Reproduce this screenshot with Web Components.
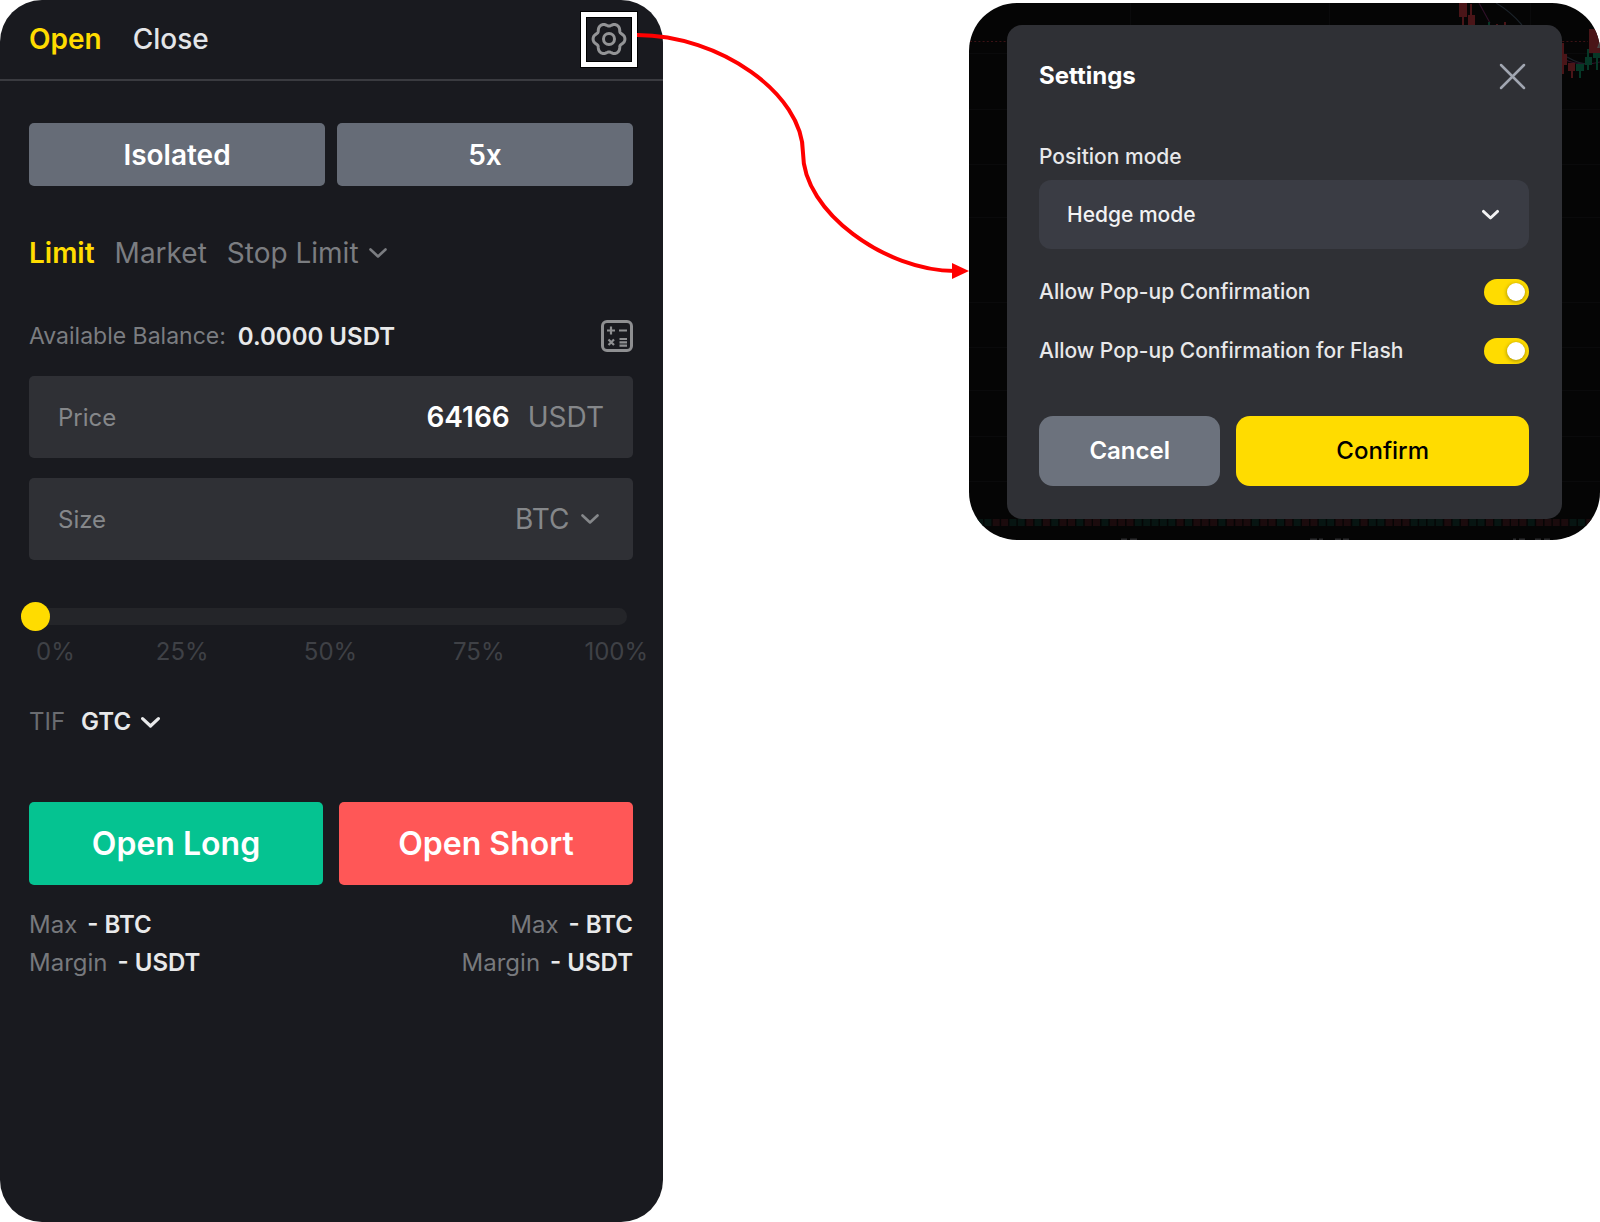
<!DOCTYPE html>
<html lang="en">
<head>
<meta charset="utf-8">
<title>Futures order settings</title>
<style>
  body { margin: 0; background: #fff; font-family: Inter, "Liberation Sans", sans-serif; }
</style>
</head>
<body>
<guide-page></guide-page>

<script>
const reset = `
  *, *::before, *::after { box-sizing: border-box; }
  button, input, select { font: inherit; color: inherit; border: 0; margin: 0; padding: 0; background: none; outline: 0; border-radius: 0; }
  button, select { cursor: pointer; }
  svg { display: block; flex: none; }
`;

function define(name, render) {
  customElements.define(name, class extends HTMLElement {
    constructor() {
      super();
      this.attachShadow({ mode: 'open' });
    }
    connectedCallback() {
      this.shadowRoot.innerHTML = `<style>${reset}</style>` + render(this);
    }
  });
}

/* Native select with its own chevron */
define('drop-down', el => `
  <style>
    :host { display: inline-grid; align-items: center; }
    select { grid-area: 1 / 1; appearance: none; width: 100%; height: 100%; padding: 0 var(--arrow-space, 28px) 0 var(--indent, 0px); font-weight: inherit; }
    option { color: #000; }
    svg { grid-area: 1 / 1; justify-self: end; pointer-events: none; margin-right: var(--arrow-inset, 0px); }
  </style>
  <select aria-label="${el.getAttribute('label')}"><option>${el.getAttribute('value')}</option></select>
  <svg width="${el.getAttribute('size') || 18}" viewBox="0 0 18 12" fill="none" stroke="currentColor" stroke-width="${el.getAttribute('stroke') || 2.6}" stroke-linecap="round" stroke-linejoin="round"><path d="M1.5 2.5 9 9.5l7.5-7"/></svg>
`);

define('solid-button', () => `
  <style>
    :host { display: block; }
    button { width: 100%; height: var(--height); border-radius: var(--radius, 5px); background: var(--fill); color: var(--ink, #fff); font-size: var(--size); font-weight: var(--weight, 600); }
  </style>
  <button type="button"><slot></slot></button>
`);

define('field-box', el => `
  <style>
    :host { display: flex; align-items: center; height: 82px; padding: 0 29px; border-radius: 5px; background: #2f3035; color: #85878a; font-size: 28px; }
    label { font-size: 24px; flex: none; }
    input { flex: 1; min-width: 0; text-align: right; color: #fff; font-weight: 600; margin-right: 18px; }
  </style>
  <label for="value">${el.getAttribute('label')}</label>
  <input id="value" type="text" inputmode="decimal" value="${el.getAttribute('value') || ''}">
  <slot></slot>
`);

define('percent-slider', () => `
  <style>
    :host { display: block; }
    input { display: block; appearance: none; height: 30px; width: calc(100% + 2px); margin-left: -8px; }
    input::-webkit-slider-runnable-track { height: 17px; border-radius: 9px; background: linear-gradient(#242529, #242529) 8px 0 / calc(100% - 8px) 100% no-repeat; }
    input::-webkit-slider-thumb { appearance: none; width: 29px; height: 29px; margin-top: -6px; border-radius: 50%; background: #ffdc00; }
    .marks { display: grid; grid-template-columns: 72fr 148fr 148fr 148fr 95fr; margin: 5px -15px 0 7px; font-size: 24px; line-height: 32px; color: #3f4146; text-align: center; }
    .marks span:first-child { text-align: left; }
    .marks span:last-child { text-align: right; }
  </style>
  <input type="range" min="0" max="100" value="0" aria-label="Percent of balance">
  <div class="marks"><span>0%</span><span>25%</span><span>50%</span><span>75%</span><span>100%</span></div>
`);

define('order-stats', () => `
  <style>
    :host { display: block; font-size: 24px; line-height: 38px; color: #77797d; }
    div { display: flex; gap: 10px; justify-content: var(--align, flex-start); }
    b { font-weight: 600; color: #e8e9ea; }
  </style>
  <div><span>Max</span><b>- BTC</b></div>
  <div><span>Margin</span><b>- USDT</b></div>
`);

/* Six-lobed cog outline */
const cog = 'M' + Array.from({ length: 90 }, (_, i) => {
  const a = i / 90 * Math.PI * 2;
  const r = 14.6 + 1.5 * Math.cos(6 * a) - 0.2 * Math.cos(12 * a);
  return (r * Math.cos(a)).toFixed(2) + ' ' + (r * Math.sin(a)).toFixed(2);
}).join('L') + 'Z';

define('order-panel', () => `
  <style>
    :host { display: block; min-height: 100vh; box-sizing: border-box; border-radius: 42px; background: #191a1f; color: #e3e5e8; overflow: hidden; }
    header { display: flex; align-items: center; height: 81px; padding: 0 26px 1px 29px; border-bottom: 2px solid #3a3b40; font-size: 28px; gap: 31px; }
    header button { font-weight: 500; }
    header .on { font-weight: 600; color: #ffdc00; }
    header .gear { margin-left: auto; width: 56px; height: 55px; border: 5px solid #fff; outline: 1px solid #000; box-shadow: inset 0 0 0 1px #000; display: grid; place-items: center; color: #939496; }
    main { padding: 42px 30px 40px 29px; }
    .pair { display: grid; grid-template-columns: 1fr 1fr; gap: 12px; }
    .mode { --fill: #666c77; --height: 63px; --size: 28px; }
    .types { display: flex; gap: 20px; margin: 50px 0; height: 34px; font-size: 28px; color: #7b7d81; }
    .types .on { color: #ffdc00; font-weight: 600; }
    .balance { display: flex; align-items: center; gap: 12px; height: 32px; margin-bottom: 24px; font-size: 23px; color: #7b7d81; }
    .balance b { font-size: 24px; font-weight: 600; color: #e8e9ea; }
    .balance button { margin-left: auto; color: #8e8f91; }
    field-box { margin-bottom: 20px; }
    percent-slider { margin-top: 41px; }
    .tif { display: flex; gap: 16px; height: 32px; line-height: 32px; margin: 38px 0 64px; font-size: 24px; color: #6a6c70; }
    .tif drop-down { color: #e8e9ea; font-weight: 600; }
    .actions { gap: 16px; --height: 83px; --size: 32px; }
    .long { --fill: #05c391; }
    .short { --fill: #ff5757; }
    .stats { margin-top: 21px; }
  </style>
  <header>
    <button type="button" class="on">Open</button>
    <button type="button">Close</button>
    <button type="button" class="gear" aria-label="Settings">
      <svg width="36" height="36" viewBox="-18 -18 36 36" fill="none" stroke="currentColor" stroke-width="3" stroke-linejoin="round">
        <path d="${cog}"/>
        <circle r="5.500"/>
      </svg>
    </button>
  </header>
  <main>
    <div class="pair mode"><solid-button>Isolated</solid-button><solid-button>5x</solid-button></div>
    <div class="types">
      <button type="button" class="on">Limit</button>
      <button type="button">Market</button>
      <drop-down label="Stop order type" value="Stop Limit"></drop-down>
    </div>
    <div class="balance">
      <span>Available Balance:</span><b>0.0000 USDT</b>
      <button type="button" aria-label="Calculator">
        <svg width="32" height="32" viewBox="0 0 32 32" fill="none" stroke="currentColor" stroke-width="2.200">
          <rect x="1.500" y="1.500" width="29" height="29" rx="4.500" stroke-width="3"/>
          <path d="M6 10.500h8M10 6.500v8M18 10.500h8M7.500 19.500l5.500 5.500M13 19.500l-5.500 5.500M18.500 19h7.500M18.500 22.300h7.500M18.500 25.600h7.500"/>
        </svg>
      </button>
    </div>
    <field-box label="Price" value="64166">USDT</field-box>
    <field-box label="Size"><drop-down label="Size unit" value="BTC" style="--arrow-space:34px;--arrow-inset:5px"></drop-down></field-box>
    <percent-slider></percent-slider>
    <div class="tif"><span>TIF</span><drop-down label="Time in force" value="GTC" size="19" stroke="3"></drop-down></div>
    <div class="pair actions"><solid-button class="long">Open Long</solid-button><solid-button class="short">Open Short</solid-button></div>
    <div class="pair stats"><order-stats></order-stats><order-stats style="--align:flex-end"></order-stats></div>
  </main>
`);

define('link-arrow', () => `
  <style>
    :host { display: block; position: relative; z-index: 1; margin-left: -26px; pointer-events: none; }
    svg { width: 100%; height: auto; }
  </style>
  <svg viewBox="0 0 332 290" fill="none" aria-hidden="true">
    <path d="M0 35C83 35 166 94 166 153S249 271 318 271" stroke="#f00" stroke-width="4"/>
    <path d="M315 263l17 8-17 8z" fill="#f00"/>
  </svg>
`);

define('toggle-row', () => `
  <style>
    :host { display: block; }
    label { display: flex; align-items: center; justify-content: space-between; height: 26px; cursor: pointer; }
    input { appearance: none; flex: none; width: 45px; height: 26px; padding: 4px; border-radius: 13px; background: #666c77; display: flex; align-items: center; }
    input::before { content: ""; width: 18px; height: 18px; border-radius: 50%; background: #fff; box-shadow: 0 1px 4px #0006; }
    input:checked { background: #ffdc00; justify-content: flex-end; }
  </style>
  <label><slot></slot><input type="checkbox" role="switch" checked></label>
`);

/* Dimmed trading chart that shows around the dialog */
define('chart-backdrop', () => {
  const rows = [50, 106, 161, 214, 299, 344, 387, 433, 478];
  const cols = [161, 360, 561];
  const pattern = 'ggrrggrgrgrrgrrgrrrgggggrgrrrgrrrgrrgrgrrggrrgrggrrrggggrgrggrgrrrgrrrrggrrgg';
  const volume = [...pattern].map((c, i) =>
    `<rect x="${(7 + i * 8.36).toFixed(1)}" y="516" width="7" height="7" fill="${c === 'r' ? '#1b0b0d' : '#071512'}"/>`).join('');
  return `
  <style>
    :host { display: block; }
    svg { width: 100%; height: 100%; }
  </style>
  <svg viewBox="0 0 631 537" preserveAspectRatio="none" aria-hidden="true">
    <g stroke="#0a0a0b">${rows.map(y => `<path d="M0 ${y}.5H631"/>`).join('')}${cols.map(x => `<path d="M${x}.5 0V516"/>`).join('')}</g>
    <path d="M1 38.500H619" stroke="#3c1215" stroke-dasharray="2 2.200"/>
    <g fill="none" stroke-width="1.200"><path d="M510 0L521 20M594 56Q612 64 631 59" stroke="#2f1128"/><path d="M527 0Q541 8 553 22M598 54Q612 62 622 61" stroke="#1b2229"/></g>
    <g fill="#4a1518">
      <path d="M490 0h8v14h-8zM493 14h2v8h-2zM499 12h7v10h-7zM501 1h2v11h-2zM527 21h2v4h-2zM535 19h2v4h-2z"/>
      <path d="M593 51h5v11h-5zM593 40h2v31h-2zM599 60h7v8h-7zM602 68h2v7h-2zM620 26h11v24h-11z"/>
    </g>
    <g fill="#063827"><path d="M519 19h2v4h-2zM607 61h8v7h-8zM610 68h2v7h-2zM616 54h7v8h-7zM618 46h2v21h-2zM624 50h7v5h-7zM627 55h2v12h-2z"/></g>
    <path d="M628 45l3-8v8z" fill="#4a4a4a"/>
    ${volume}
    <g fill="#2c2c2e"><path d="M152 535.500h6v1.500h-6zM161 535.500h7v1.500h-7zM341 535.500h7v1.500h-7zM350 535.500h4v1.500h-4zM366 535.500h6v1.500h-6zM374 535.500h6v1.500h-6zM544 535.500h3v1.500h-3zM550 535.500h6v1.500h-6zM566 535.500h6v1.500h-6zM575 535.500h6v1.500h-6z"/></g>
  </svg>`;
});

define('settings-dialog', () => `
  <style>
    :host { display: grid; margin-top: 3px; border-radius: 48px; background: #050505; overflow: hidden; color: #e8e8ea; font-size: 21px; font-weight: 500; line-height: 28px; }
    chart-backdrop { grid-area: 1 / 1; height: 0; min-height: 100%; }
    section { grid-area: 1 / 1; position: relative; margin: 22px 38px 21px; padding: 33px 33px 33px 32px; border-radius: 15px; background: #2f3035; }
    .top { display: flex; justify-content: space-between; align-items: center; height: 36px; }
    h2 { margin: 0; font-size: 24px; font-weight: 700; color: #fff; }
    .top button { color: #a0a5b0; padding: 0 3px; }
    p { margin: 49px 0 9px; }
    drop-down { display: grid; height: 69px; border-radius: 12px; background: #3a3c44; color: #f2f2f3; --indent: 28px; --arrow-inset: 30px; }
    toggle-row { margin-top: 30px; }
    toggle-row + toggle-row { margin-top: 33px; }
    .buttons { display: grid; grid-template-columns: 181fr 292fr; gap: 16px; margin-top: 52px; --height: 70px; --radius: 14px; --size: 24px; }
    .cancel { --fill: #6c727d; }
    .confirm { --fill: #ffdc00; --ink: #000; --weight: 500; }
  </style>
  <chart-backdrop></chart-backdrop>
  <section role="dialog" aria-label="Settings">
    <div class="top">
      <h2>Settings</h2>
      <button type="button" aria-label="Close"><svg width="27" height="27" viewBox="0 0 27 27" fill="none" stroke="currentColor" stroke-width="2.500" stroke-linecap="round"><path d="M2 2l23 23M25 2L2 25"/></svg></button>
    </div>
    <p>Position mode</p>
    <drop-down label="Position mode" value="Hedge mode" size="17" stroke="3"></drop-down>
    <toggle-row>Allow Pop-up Confirmation</toggle-row>
    <toggle-row>Allow Pop-up Confirmation for Flash</toggle-row>
    <div class="buttons"><solid-button class="cancel">Cancel</solid-button><solid-button class="confirm">Confirm</solid-button></div>
  </section>
`);

define('guide-page', () => `
  <style>
    :host { display: grid; grid-template-columns: minmax(0, 663fr) minmax(0, 306fr) minmax(0, 631fr); align-items: start; }
  </style>
  <order-panel></order-panel>
  <link-arrow></link-arrow>
  <settings-dialog></settings-dialog>
`);
</script>
</body>
</html>
